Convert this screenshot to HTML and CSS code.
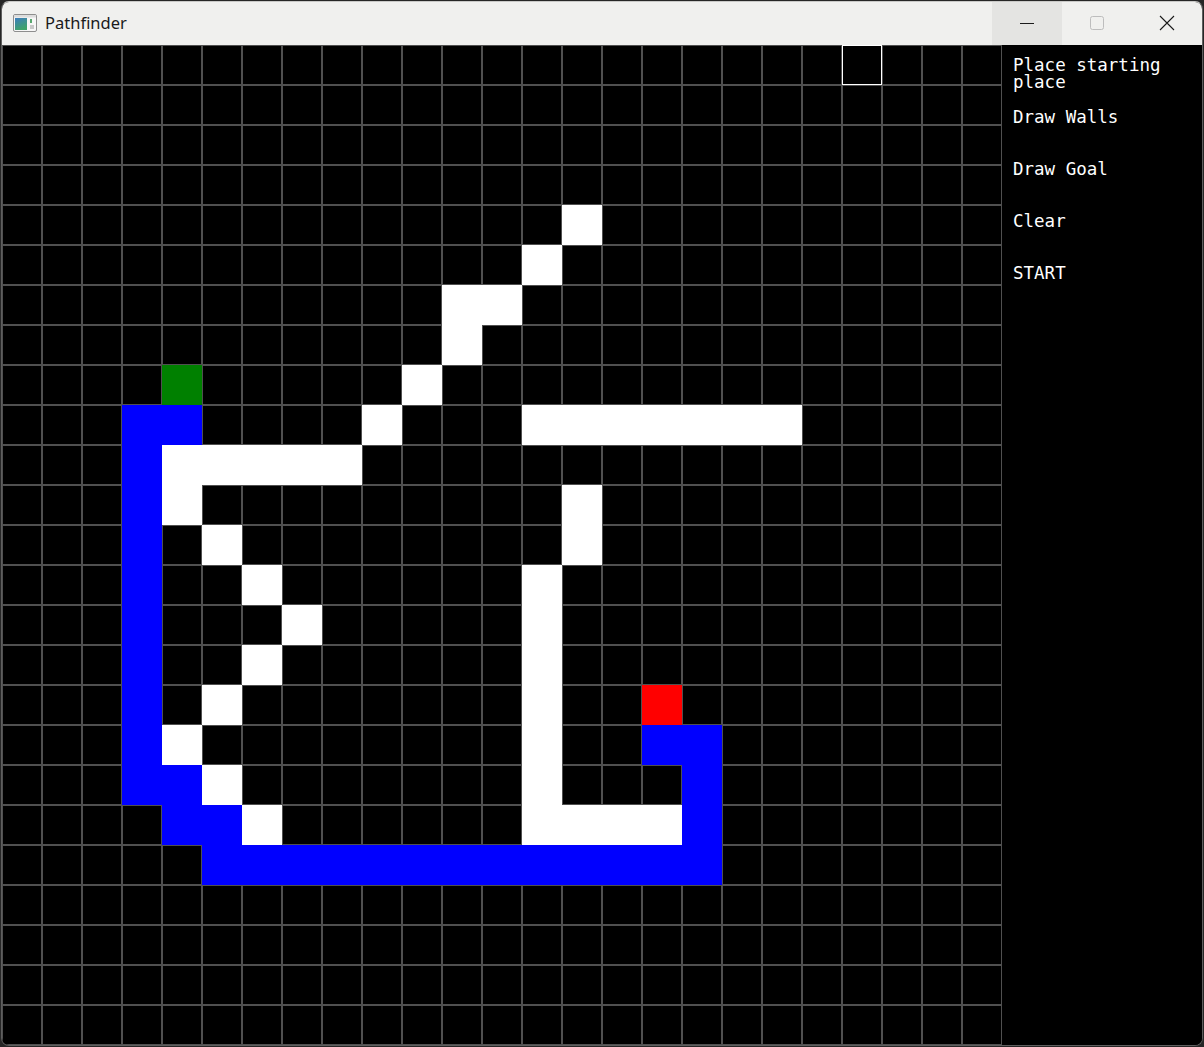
FILE: index.html
```html
<!DOCTYPE html>
<html lang="en">
<head>
<meta charset="utf-8">
<title>Pathfinder</title>
<link rel="stylesheet" href="styles.css">
</head>
<body>
<div class="window">
  <header class="titlebar">
    <div class="app">
      <svg class="app-icon" width="24" height="18" viewBox="0 0 24 18">
        <defs>
          <linearGradient id="pane" x1="0" y1="0" x2="0.4" y2="1">
            <stop offset="0" stop-color="#3d7dbf"/>
            <stop offset="1" stop-color="#3fa36a"/>
          </linearGradient>
        </defs>
        <rect x="0.5" y="0.5" width="23" height="17" rx="1.5" fill="#f7f7f7" stroke="#8e8e8e"/>
        <rect x="1" y="1" width="22" height="2.5" fill="#dcdcdc"/>
        <rect x="2" y="4" width="12" height="12" fill="url(#pane)"/>
        <rect x="17" y="5" width="2" height="4" fill="#5aa870"/>
        <rect x="17" y="11" width="4" height="4" fill="#c9c9c9"/>
      </svg>
      <span class="app-title">Pathfinder</span>
    </div>
    <div class="controls">
      <div class="ctl ctl-hover">
        <svg width="16" height="16" viewBox="0 0 16 16"><path d="M1 8.5H15" stroke="#1b1b1b" stroke-width="1"/></svg>
      </div>
      <div class="ctl">
        <svg width="16" height="16" viewBox="0 0 16 16"><rect x="1.5" y="1.5" width="13" height="13" rx="2" fill="none" stroke="#bdbdbd" stroke-width="1"/></svg>
      </div>
      <div class="ctl">
        <svg width="16" height="16" viewBox="0 0 16 16"><path d="M1 1L15 15M15 1L1 15" stroke="#1b1b1b" stroke-width="1.1"/></svg>
      </div>
    </div>
  </header>
  <main class="client">
    <section class="board">
      <div class="cell wall" style="grid-area:5/15/6/16"></div>
      <div class="cell wall" style="grid-area:6/14/7/15"></div>
      <div class="cell wall" style="grid-area:7/12/8/14"></div>
      <div class="cell wall" style="grid-area:8/12/9/13"></div>
      <div class="cell wall" style="grid-area:9/11/10/12"></div>
      <div class="cell wall" style="grid-area:10/10/11/11"></div>
      <div class="cell wall" style="grid-area:10/14/11/21"></div>
      <div class="cell wall" style="grid-area:11/5/12/10"></div>
      <div class="cell wall" style="grid-area:12/5/13/6"></div>
      <div class="cell wall" style="grid-area:12/15/14/16"></div>
      <div class="cell wall" style="grid-area:13/6/14/7"></div>
      <div class="cell wall" style="grid-area:14/7/15/8"></div>
      <div class="cell wall" style="grid-area:14/14/21/15"></div>
      <div class="cell wall" style="grid-area:15/8/16/9"></div>
      <div class="cell wall" style="grid-area:16/7/17/8"></div>
      <div class="cell wall" style="grid-area:17/6/18/7"></div>
      <div class="cell wall" style="grid-area:18/5/19/6"></div>
      <div class="cell wall" style="grid-area:19/6/20/7"></div>
      <div class="cell wall" style="grid-area:20/7/21/8"></div>
      <div class="cell wall" style="grid-area:20/15/21/18"></div>

      <div class="cell path" style="grid-area:10/4/11/6"></div>
      <div class="cell path" style="grid-area:11/4/20/5"></div>
      <div class="cell path" style="grid-area:19/5/20/6"></div>
      <div class="cell path" style="grid-area:20/5/21/7"></div>
      <div class="cell path" style="grid-area:21/6/22/19"></div>
      <div class="cell path" style="grid-area:18/18/21/19"></div>
      <div class="cell path" style="grid-area:18/17/19/18"></div>

      <div class="cell start" style="grid-area:9/5/10/6"></div>
      <div class="cell goal" style="grid-area:17/17/18/18"></div>
      <div class="cell cursor" style="grid-area:1/22/2/23"></div>
    </section>
    <nav class="menu">
      <div class="menu-item">Place starting place</div>
      <div class="menu-item">Draw Walls</div>
      <div class="menu-item">Draw Goal</div>
      <div class="menu-item">Clear</div>
      <div class="menu-item">START</div>
    </nav>
  </main>
</div>
</body>
</html>
```

FILE: styles.css
```css
html, body {
  margin: 0;
  padding: 0;
}

body {
  background: #262626;
  width: 1204px;
  height: 1047px;
  overflow: hidden;
}

.window {
  margin: 1px 0 0 1px;
  width: 1200px;
  border: 1px solid #5e5e5e;
  border-top-color: #c9c9c7;
  border-radius: 8px;
  overflow: hidden;
  background: #000;
}

.titlebar {
  height: 43px;
  background: #f0f0ee;
  display: flex;
  justify-content: space-between;
  align-items: stretch;
}

.app {
  display: flex;
  align-items: center;
  padding-left: 11px;
  gap: 8px;
}

.app-icon {
  display: block;
  margin-top: -1px;
}

.app-title {
  font-family: "Noto Sans", "Open Sans", sans-serif;
  font-size: 16.5px;
  color: #1a1a1a;
  margin-top: -3px;
}

.controls {
  display: flex;
}

.ctl {
  width: 70px;
  display: flex;
  align-items: center;
  justify-content: center;
}

.ctl svg {
  display: block;
  margin-top: -1px;
}

.ctl-hover {
  background: #e4e4e2;
}

.client {
  display: flex;
  height: 1000px;
}

.board {
  width: 1000px;
  height: 1000px;
  display: grid;
  grid-template-columns: repeat(25, 40px);
  grid-template-rows: repeat(25, 40px);
  background-color: #000;
  background-image:
    linear-gradient(to right, #505050 0, #505050 1px, transparent 1px, transparent 39px, #505050 39px, #505050 40px),
    linear-gradient(to bottom, #505050 0, #505050 1px, transparent 1px, transparent 39px, #505050 39px, #505050 40px);
  background-size: 40px 40px;
}

.cell {
  box-sizing: border-box;
}

.wall { background: #ffffff; }
.path { background: #0000ff; }
.start { background: #008000; }
.goal { background: #ff0000; }
.cursor {
  background: #000;
  border: 1px solid #ffffff;
}

.menu {
  width: 200px;
  background: #000;
  display: flex;
  flex-direction: column;
  padding: 12px 0 0 11px;
  box-sizing: border-box;
}

.menu-item {
  height: 52px;
  font-family: "DejaVu Sans Mono", "Liberation Mono", monospace;
  font-size: 17.5px;
  line-height: 16.5px;
  color: #ffffff;
  padding-right: 4px;
}
```
